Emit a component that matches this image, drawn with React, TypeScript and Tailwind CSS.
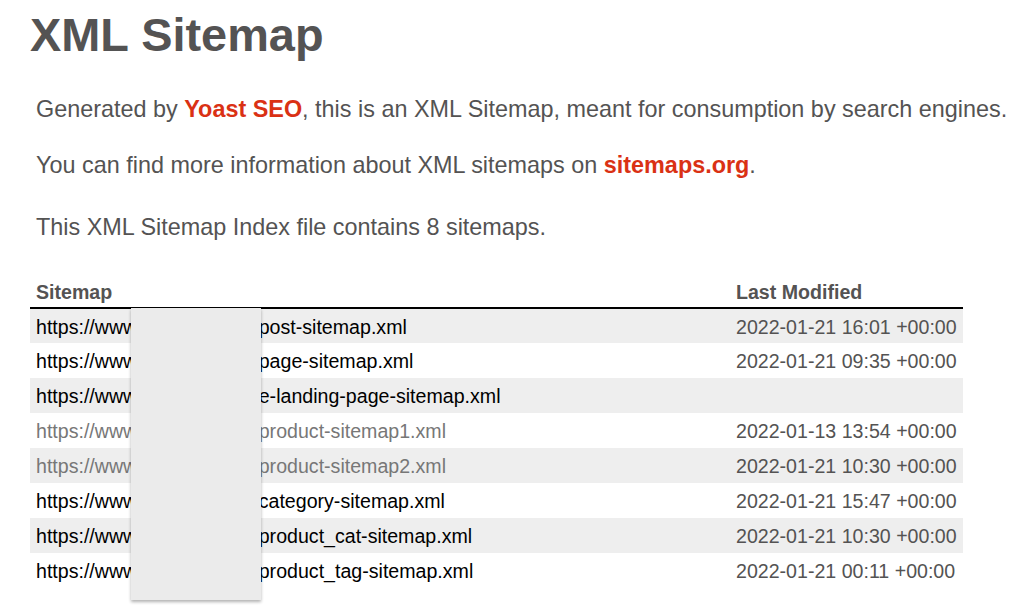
import React from 'react';

interface SitemapEntry {
  slug: string;
  lastmod: string;
  visited?: boolean;
}

const entries: SitemapEntry[] = [
  { slug: 'post-sitemap.xml', lastmod: '2022-01-21 16:01 +00:00' },
  { slug: 'page-sitemap.xml', lastmod: '2022-01-21 09:35 +00:00' },
  { slug: 'e-landing-page-sitemap.xml', lastmod: '' },
  { slug: 'product-sitemap1.xml', lastmod: '2022-01-13 13:54 +00:00', visited: true },
  { slug: 'product-sitemap2.xml', lastmod: '2022-01-21 10:30 +00:00', visited: true },
  { slug: 'category-sitemap.xml', lastmod: '2022-01-21 15:47 +00:00' },
  { slug: 'product_cat-sitemap.xml', lastmod: '2022-01-21 10:30 +00:00' },
  { slug: 'product_tag-sitemap.xml', lastmod: '2022-01-21 00:11 +00:00' },
];

export default function App() {
  return (
    <div className="relative w-[1020px] h-[608px] overflow-hidden bg-white text-[#545353] font-['Liberation_Sans',Arial,Helvetica,sans-serif]">
      <div className="pl-[30px]">
        <h1 className="pt-[12px] text-[46.9px] font-bold leading-none">XML Sitemap</h1>

        <div className="pl-[6px] text-[23.4px] leading-[28px]">
          <p className="mt-[36px] whitespace-nowrap">
            Generated by <a className="font-bold text-[#da3114]">Yoast SEO</a>, this is an XML Sitemap, meant for
            consumption by search engines.
          </p>
          <p className="mt-[28px] whitespace-nowrap">
            You can find more information about XML sitemaps on{' '}
            <a className="font-bold text-[#da3114]">sitemaps.org</a>.
          </p>
          <p className="mt-[34px] whitespace-nowrap">This XML Sitemap Index file contains 8 sitemaps.</p>
        </div>

        <table className="mt-[40px] w-[933px] border-collapse text-[19.6px]">
          <thead>
            <tr>
              <th className="w-[700px] px-[6px] pt-0 pb-[4px] text-left font-bold leading-[22px] border-b-2 border-black">
                Sitemap
              </th>
              <th className="px-[6px] pt-0 pb-[4px] text-left font-bold leading-[22px] border-b-2 border-black whitespace-nowrap">
                Last Modified
              </th>
            </tr>
          </thead>
          <tbody>
            {entries.map((entry, index) => (
              <tr key={entry.slug} className={index % 2 === 0 ? 'bg-[#eeeeee]' : 'bg-white'}>
                <td className="h-[35px] px-[6px] pt-[2px] pb-0 leading-[22px] align-middle whitespace-nowrap">
                  <a className={entry.visited ? 'text-[#777777]' : 'text-black'}>
                    https://www
                    <span className="inline-block w-[116px] align-top">.example.nl</span>/{entry.slug}
                  </a>
                </td>
                <td className="h-[35px] px-[6px] pt-[2px] pb-0 leading-[22px] align-middle whitespace-nowrap">
                  {entry.lastmod}
                </td>
              </tr>
            ))}
          </tbody>
        </table>
      </div>

      {/* redaction box over the domain */}
      <div className="absolute left-[131px] top-[308px] w-[130px] h-[292px] bg-[#ebebeb] shadow-[0_2px_3px_rgba(0,0,0,0.3)]" />
    </div>
  );
}
